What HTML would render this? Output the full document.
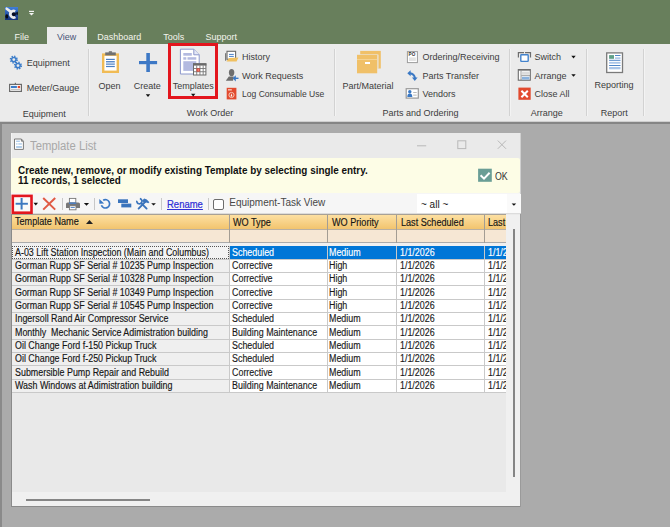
<!DOCTYPE html>
<html><head><meta charset="utf-8">
<style>
*{box-sizing:border-box;margin:0;padding:0}
html,body{width:670px;height:527px;overflow:hidden;background:#ababab;font-family:"Liberation Sans",sans-serif}
.a{position:absolute}
.t{position:absolute;white-space:pre;transform-origin:0 0}
.r{color:#3c3c3c}
.g{transform:scaleX(0.89);color:#151515;-webkit-text-stroke:0.15px currentColor}
.tab{color:#f4f4ec}
.sep{position:absolute;width:1px;background:#d2d2d2}
svg{position:absolute;overflow:visible}
</style></head><body>
<div class="a" style="left:0;top:0;width:670px;height:44px;background:#687f5c"></div>
<div class="a" style="left:47px;top:27px;width:40px;height:17px;background:#ebebeb"></div>
<div class="t r tab" style="left:14.5px;top:32.98px;font-size:9px;line-height:9px;">File</div>
<div class="t r" style="left:57px;top:32.98px;font-size:9px;line-height:9px;color:#4a5577;">View</div>
<div class="t r tab" style="left:97.3px;top:32.98px;font-size:9px;line-height:9px;">Dashboard</div>
<div class="t r tab" style="left:163.2px;top:32.98px;font-size:9px;line-height:9px;">Tools</div>
<div class="t r tab" style="left:205.6px;top:32.98px;font-size:9px;line-height:9px;">Support</div>
<div class="a" style="left:0;top:44px;width:670px;height:78px;background:#ebebeb"></div>
<div class="a" style="left:0;top:121px;width:670px;height:1px;background:#cfcfcf"></div>
<div class="a" style="left:0;top:122px;width:670px;height:2px;background:#858585"></div>
<div class="a" style="left:0;top:124px;width:2px;height:403px;background:#8a8a8a"></div>
<div class="sep" style="left:88px;top:49px;height:67px"></div>
<div class="a" style="left:89px;top:49px;width:1px;height:67px;background:#f3f3f3"></div>
<div class="sep" style="left:334px;top:49px;height:67px"></div>
<div class="a" style="left:335px;top:49px;width:1px;height:67px;background:#f3f3f3"></div>
<div class="sep" style="left:509px;top:49px;height:67px"></div>
<div class="a" style="left:510px;top:49px;width:1px;height:67px;background:#f3f3f3"></div>
<div class="sep" style="left:586px;top:49px;height:67px"></div>
<div class="a" style="left:587px;top:49px;width:1px;height:67px;background:#f3f3f3"></div>
<div class="sep" style="left:643px;top:49px;height:67px"></div>
<div class="a" style="left:644px;top:49px;width:1px;height:67px;background:#f3f3f3"></div>
<div class="t r" style="left:26.8px;top:59.48px;font-size:9px;line-height:9px;">Equipment</div>
<div class="t r" style="left:26.8px;top:83.98px;font-size:9px;line-height:9px;">Meter/Gauge</div>
<div class="t r" style="left:22.8px;top:109.98px;font-size:9px;line-height:9px;">Equipment</div>
<div class="t r" style="left:98.5px;top:81.58px;font-size:9px;line-height:9px;">Open</div>
<div class="t r" style="left:133.8px;top:81.58px;font-size:9px;line-height:9px;">Create</div>
<div class="t r" style="left:172.8px;top:81.68px;font-size:9px;line-height:9px;">Templates</div>
<div class="t r" style="left:242.0px;top:52.98px;font-size:9px;line-height:9px;">History</div>
<div class="t r" style="left:242.0px;top:71.58px;font-size:9px;line-height:9px;">Work Requests</div>
<div class="t r" style="left:242.20000000000002px;top:90.38px;font-size:9px;line-height:9px;transform:scaleX(0.95);">Log Consumable Use</div>
<div class="t r" style="left:186.8px;top:109.48px;font-size:9px;line-height:9px;">Work Order</div>
<div class="t r" style="left:342.40000000000003px;top:81.78px;font-size:9px;line-height:9px;">Part/Material</div>
<div class="t r" style="left:422.5px;top:52.98px;font-size:9px;line-height:9px;">Ordering/Receiving</div>
<div class="t r" style="left:422.5px;top:71.58px;font-size:9px;line-height:9px;">Parts Transfer</div>
<div class="t r" style="left:422.5px;top:90.38px;font-size:9px;line-height:9px;">Vendors</div>
<div class="t r" style="left:382.5px;top:109.48px;font-size:9px;line-height:9px;">Parts and Ordering</div>
<div class="t r" style="left:534.5999999999999px;top:52.98px;font-size:9px;line-height:9px;">Switch</div>
<div class="t r" style="left:534.5999999999999px;top:71.58px;font-size:9px;line-height:9px;">Arrange</div>
<div class="t r" style="left:534.5999999999999px;top:90.38px;font-size:9px;line-height:9px;">Close All</div>
<div class="t r" style="left:530.8px;top:109.48px;font-size:9px;line-height:9px;">Arrange</div>
<div class="t r" style="left:594.5999999999999px;top:81.38px;font-size:9px;line-height:9px;">Reporting</div>
<div class="t r" style="left:600.8px;top:109.48px;font-size:9px;line-height:9px;">Report</div>
<div class="a" style="left:168px;top:43px;width:50px;height:56px;border:3px solid #e3151d"></div>
<div class="a" style="left:11px;top:133px;width:510px;height:374px;background:#eaeaea;border-right:1px solid #d0d0d0"></div>
<div class="a" style="left:11px;top:133px;width:1px;height:80px;background:#f4f4f4"></div>
<div class="t " style="left:29.6px;top:140.24px;font-size:12px;line-height:12px;transform:scaleX(0.94);color:#a8a8a8;">Template List</div>
<div class="a" style="left:11px;top:158px;width:509px;height:35px;border-radius:2px;background:#fdfde6"></div>
<div class="t " style="left:18px;top:165.53px;font-size:10px;line-height:10px;transform:scaleX(0.99);font-weight:bold;color:#101010;">Create new, remove, or modify existing Template by selecting single entry.</div>
<div class="t " style="left:18px;top:176.03px;font-size:10px;line-height:10px;transform:scaleX(0.99);font-weight:bold;color:#101010;">11 records, 1 selected</div>
<div class="a" style="left:11px;top:193px;width:509px;height:21px;background:#f6f6f6"></div>
<div class="a" style="left:12px;top:213px;width:508px;height:1px;background:#dcdcdc"></div>
<div class="a" style="left:12px;top:214px;width:494px;height:1px;background:#a8a196"></div>
<div class="a" style="left:417px;top:194px;width:104px;height:19px;background:#ffffff"></div>
<div class="t " style="left:421px;top:200.03px;font-size:10px;line-height:10px;transform:scaleX(1.0);color:#202020;">~ all ~</div>
<div class="t " style="left:494.8px;top:172.34px;font-size:10px;line-height:10px;transform:scaleX(0.88);color:#333;">OK</div>
<div class="t " style="left:229.3px;top:198.23px;font-size:10px;line-height:10px;transform:scaleX(1.0);color:#474747;">Equipment-Task View</div>
<div class="t " style="left:166.7px;top:200.13px;font-size:10px;line-height:10px;transform:scaleX(0.95);color:#2f2fd6;text-decoration:underline;-webkit-text-stroke:0.2px #2f2fd6;">Rename</div>
<div class="a" style="left:62px;top:198px;width:1px;height:12px;background:#c8c8c8"></div>
<div class="a" style="left:94px;top:198px;width:1px;height:12px;background:#c8c8c8"></div>
<div class="a" style="left:161px;top:198px;width:1px;height:12px;background:#c8c8c8"></div>
<div class="a" style="left:208px;top:198px;width:1px;height:12px;background:#c8c8c8"></div>
<div class="a" style="left:213px;top:198.5px;width:11px;height:11px;border:1px solid #6d6d6d;border-radius:2px;background:#fff"></div>
<div class="a" style="left:12px;top:215px;width:494px;height:15px;background:linear-gradient(#fde0a2,#f2c46e);border-bottom:1px solid #b9b0a2"></div>
<div class="a" style="left:12px;top:230px;width:494px;height:13px;background:#f6e7d4;border-bottom:1px solid #ababab"></div>
<div class="a" style="left:12px;top:243px;width:494px;height:3px;background:#f0f0f0"></div>
<div class="a" style="left:229px;top:215px;width:1px;height:28px;background:#a39d94"></div>
<div class="a" style="left:327px;top:215px;width:1px;height:28px;background:#a39d94"></div>
<div class="a" style="left:396px;top:215px;width:1px;height:28px;background:#a39d94"></div>
<div class="a" style="left:484px;top:215px;width:1px;height:28px;background:#a39d94"></div>
<div class="t g" style="left:15px;top:217.13px;font-size:10px;line-height:10px;transform:scaleX(0.91);">Template Name</div>
<div class="t g" style="left:233px;top:217.84px;font-size:10px;line-height:10px;transform:scaleX(0.91);">WO Type</div>
<div class="t g" style="left:331.6px;top:217.84px;font-size:10px;line-height:10px;transform:scaleX(0.91);">WO Priority</div>
<div class="t g" style="left:400.9px;top:217.84px;font-size:10px;line-height:10px;transform:scaleX(0.91);">Last Scheduled</div>
<div class="t g" style="left:488.3px;top:217.84px;font-size:10px;line-height:10px;transform:scaleX(0.91);">Last</div>
<svg style="left:86px;top:220px" width="7" height="4"><path d="M0 4 L3.5 0 L7 4Z" fill="#222"/></svg>
<div class="a" style="left:12px;top:246px;width:494px;height:246px;background:#e9e9e9"></div>
<div class="a" style="left:12px;top:246px;width:217px;height:13px;background:#f3f3f3"></div>
<div class="a" style="left:230px;top:246px;width:276px;height:13px;background:#0076d7"></div>
<div class="a" style="left:12px;top:259px;width:494px;height:1px;background:#c9c9c9"></div>
<div class="t g" style="left:14.8px;top:248.03px;font-size:10px;line-height:10px;">A-03 Lift Station Inspection (Main and Columbus)</div>
<div class="t g" style="left:232px;top:248.03px;font-size:10px;line-height:10px;color:#ffffff;">Scheduled</div>
<div class="t g" style="left:329.3px;top:248.03px;font-size:10px;line-height:10px;color:#ffffff;">Medium</div>
<div class="t g" style="left:399.5px;top:248.03px;font-size:10px;line-height:10px;color:#ffffff;">1/1/2026</div>
<div class="a" style="left:486px;top:246px;width:20px;height:13px;overflow:hidden"><div class="t g" style="left:1.5px;top:2.04px;font-size:10px;line-height:10px;color:#ffffff">1/1/2026</div></div>
<div class="a" style="left:12px;top:260px;width:217px;height:12px;background:#efefef"></div>
<div class="a" style="left:230px;top:260px;width:276px;height:12px;background:#ffffff"></div>
<div class="a" style="left:12px;top:272px;width:494px;height:1px;background:#c9c9c9"></div>
<div class="t g" style="left:14.8px;top:261.04px;font-size:10px;line-height:10px;">Gorman Rupp SF Serial # 10235 Pump Inspection</div>
<div class="t g" style="left:232px;top:261.04px;font-size:10px;line-height:10px;color:#1a1a1a;">Corrective</div>
<div class="t g" style="left:329.3px;top:261.04px;font-size:10px;line-height:10px;color:#1a1a1a;">High</div>
<div class="t g" style="left:399.5px;top:261.04px;font-size:10px;line-height:10px;color:#1a1a1a;">1/1/2026</div>
<div class="a" style="left:486px;top:260px;width:20px;height:12px;overflow:hidden"><div class="t g" style="left:1.5px;top:1.04px;font-size:10px;line-height:10px;color:#1a1a1a">1/1/2026</div></div>
<div class="a" style="left:12px;top:273px;width:217px;height:12px;background:#efefef"></div>
<div class="a" style="left:230px;top:273px;width:276px;height:12px;background:#ffffff"></div>
<div class="a" style="left:12px;top:285px;width:494px;height:1px;background:#c9c9c9"></div>
<div class="t g" style="left:14.8px;top:274.04px;font-size:10px;line-height:10px;">Gorman Rupp SF Serial # 10328 Pump Inspection</div>
<div class="t g" style="left:232px;top:274.04px;font-size:10px;line-height:10px;color:#1a1a1a;">Corrective</div>
<div class="t g" style="left:329.3px;top:274.04px;font-size:10px;line-height:10px;color:#1a1a1a;">High</div>
<div class="t g" style="left:399.5px;top:274.04px;font-size:10px;line-height:10px;color:#1a1a1a;">1/1/2026</div>
<div class="a" style="left:486px;top:273px;width:20px;height:12px;overflow:hidden"><div class="t g" style="left:1.5px;top:1.04px;font-size:10px;line-height:10px;color:#1a1a1a">1/1/2026</div></div>
<div class="a" style="left:12px;top:286px;width:217px;height:13px;background:#efefef"></div>
<div class="a" style="left:230px;top:286px;width:276px;height:13px;background:#ffffff"></div>
<div class="a" style="left:12px;top:299px;width:494px;height:1px;background:#c9c9c9"></div>
<div class="t g" style="left:14.8px;top:288.04px;font-size:10px;line-height:10px;">Gorman Rupp SF Serial # 10349 Pump Inspection</div>
<div class="t g" style="left:232px;top:288.04px;font-size:10px;line-height:10px;color:#1a1a1a;">Corrective</div>
<div class="t g" style="left:329.3px;top:288.04px;font-size:10px;line-height:10px;color:#1a1a1a;">High</div>
<div class="t g" style="left:399.5px;top:288.04px;font-size:10px;line-height:10px;color:#1a1a1a;">1/1/2026</div>
<div class="a" style="left:486px;top:286px;width:20px;height:13px;overflow:hidden"><div class="t g" style="left:1.5px;top:2.04px;font-size:10px;line-height:10px;color:#1a1a1a">1/1/2026</div></div>
<div class="a" style="left:12px;top:300px;width:217px;height:12px;background:#efefef"></div>
<div class="a" style="left:230px;top:300px;width:276px;height:12px;background:#ffffff"></div>
<div class="a" style="left:12px;top:312px;width:494px;height:1px;background:#c9c9c9"></div>
<div class="t g" style="left:14.8px;top:301.04px;font-size:10px;line-height:10px;">Gorman Rupp SF Serial # 10545 Pump Inspection</div>
<div class="t g" style="left:232px;top:301.04px;font-size:10px;line-height:10px;color:#1a1a1a;">Corrective</div>
<div class="t g" style="left:329.3px;top:301.04px;font-size:10px;line-height:10px;color:#1a1a1a;">High</div>
<div class="t g" style="left:399.5px;top:301.04px;font-size:10px;line-height:10px;color:#1a1a1a;">1/1/2026</div>
<div class="a" style="left:486px;top:300px;width:20px;height:12px;overflow:hidden"><div class="t g" style="left:1.5px;top:1.04px;font-size:10px;line-height:10px;color:#1a1a1a">1/1/2026</div></div>
<div class="a" style="left:12px;top:313px;width:217px;height:12px;background:#efefef"></div>
<div class="a" style="left:230px;top:313px;width:276px;height:12px;background:#ffffff"></div>
<div class="a" style="left:12px;top:325px;width:494px;height:1px;background:#c9c9c9"></div>
<div class="t g" style="left:14.8px;top:314.04px;font-size:10px;line-height:10px;">Ingersoll Rand Air Compressor Service</div>
<div class="t g" style="left:232px;top:314.04px;font-size:10px;line-height:10px;color:#1a1a1a;">Scheduled</div>
<div class="t g" style="left:329.3px;top:314.04px;font-size:10px;line-height:10px;color:#1a1a1a;">Medium</div>
<div class="t g" style="left:399.5px;top:314.04px;font-size:10px;line-height:10px;color:#1a1a1a;">1/1/2026</div>
<div class="a" style="left:486px;top:313px;width:20px;height:12px;overflow:hidden"><div class="t g" style="left:1.5px;top:1.04px;font-size:10px;line-height:10px;color:#1a1a1a">1/1/2026</div></div>
<div class="a" style="left:12px;top:326px;width:217px;height:13px;background:#efefef"></div>
<div class="a" style="left:230px;top:326px;width:276px;height:13px;background:#ffffff"></div>
<div class="a" style="left:12px;top:339px;width:494px;height:1px;background:#c9c9c9"></div>
<div class="t g" style="left:14.8px;top:328.04px;font-size:10px;line-height:10px;">Monthly  Mechanic Service Adimistration building</div>
<div class="t g" style="left:232px;top:328.04px;font-size:10px;line-height:10px;color:#1a1a1a;">Building Maintenance</div>
<div class="t g" style="left:329.3px;top:328.04px;font-size:10px;line-height:10px;color:#1a1a1a;">Medium</div>
<div class="t g" style="left:399.5px;top:328.04px;font-size:10px;line-height:10px;color:#1a1a1a;">1/1/2026</div>
<div class="a" style="left:486px;top:326px;width:20px;height:13px;overflow:hidden"><div class="t g" style="left:1.5px;top:2.04px;font-size:10px;line-height:10px;color:#1a1a1a">1/1/2026</div></div>
<div class="a" style="left:12px;top:340px;width:217px;height:12px;background:#efefef"></div>
<div class="a" style="left:230px;top:340px;width:276px;height:12px;background:#ffffff"></div>
<div class="a" style="left:12px;top:352px;width:494px;height:1px;background:#c9c9c9"></div>
<div class="t g" style="left:14.8px;top:341.04px;font-size:10px;line-height:10px;">Oil Change Ford f-150 Pickup Truck</div>
<div class="t g" style="left:232px;top:341.04px;font-size:10px;line-height:10px;color:#1a1a1a;">Scheduled</div>
<div class="t g" style="left:329.3px;top:341.04px;font-size:10px;line-height:10px;color:#1a1a1a;">Medium</div>
<div class="t g" style="left:399.5px;top:341.04px;font-size:10px;line-height:10px;color:#1a1a1a;">1/1/2026</div>
<div class="a" style="left:486px;top:340px;width:20px;height:12px;overflow:hidden"><div class="t g" style="left:1.5px;top:1.04px;font-size:10px;line-height:10px;color:#1a1a1a">1/1/2026</div></div>
<div class="a" style="left:12px;top:353px;width:217px;height:12px;background:#efefef"></div>
<div class="a" style="left:230px;top:353px;width:276px;height:12px;background:#ffffff"></div>
<div class="a" style="left:12px;top:365px;width:494px;height:1px;background:#c9c9c9"></div>
<div class="t g" style="left:14.8px;top:354.04px;font-size:10px;line-height:10px;">Oil Change Ford f-250 Pickup Truck</div>
<div class="t g" style="left:232px;top:354.04px;font-size:10px;line-height:10px;color:#1a1a1a;">Scheduled</div>
<div class="t g" style="left:329.3px;top:354.04px;font-size:10px;line-height:10px;color:#1a1a1a;">Medium</div>
<div class="t g" style="left:399.5px;top:354.04px;font-size:10px;line-height:10px;color:#1a1a1a;">1/1/2026</div>
<div class="a" style="left:486px;top:353px;width:20px;height:12px;overflow:hidden"><div class="t g" style="left:1.5px;top:1.04px;font-size:10px;line-height:10px;color:#1a1a1a">1/1/2026</div></div>
<div class="a" style="left:12px;top:366px;width:217px;height:13px;background:#efefef"></div>
<div class="a" style="left:230px;top:366px;width:276px;height:13px;background:#ffffff"></div>
<div class="a" style="left:12px;top:379px;width:494px;height:1px;background:#c9c9c9"></div>
<div class="t g" style="left:14.8px;top:368.04px;font-size:10px;line-height:10px;">Submersible Pump Repair and Rebuild</div>
<div class="t g" style="left:232px;top:368.04px;font-size:10px;line-height:10px;color:#1a1a1a;">Corrective</div>
<div class="t g" style="left:329.3px;top:368.04px;font-size:10px;line-height:10px;color:#1a1a1a;">Medium</div>
<div class="t g" style="left:399.5px;top:368.04px;font-size:10px;line-height:10px;color:#1a1a1a;">1/1/2026</div>
<div class="a" style="left:486px;top:366px;width:20px;height:13px;overflow:hidden"><div class="t g" style="left:1.5px;top:2.04px;font-size:10px;line-height:10px;color:#1a1a1a">1/1/2026</div></div>
<div class="a" style="left:12px;top:380px;width:217px;height:12px;background:#efefef"></div>
<div class="a" style="left:230px;top:380px;width:276px;height:12px;background:#ffffff"></div>
<div class="a" style="left:12px;top:392px;width:494px;height:1px;background:#c9c9c9"></div>
<div class="t g" style="left:14.8px;top:381.04px;font-size:10px;line-height:10px;">Wash Windows at Adimistration building</div>
<div class="t g" style="left:232px;top:381.04px;font-size:10px;line-height:10px;color:#1a1a1a;">Building Maintenance</div>
<div class="t g" style="left:329.3px;top:381.04px;font-size:10px;line-height:10px;color:#1a1a1a;">Medium</div>
<div class="t g" style="left:399.5px;top:381.04px;font-size:10px;line-height:10px;color:#1a1a1a;">1/1/2026</div>
<div class="a" style="left:486px;top:380px;width:20px;height:12px;overflow:hidden"><div class="t g" style="left:1.5px;top:1.04px;font-size:10px;line-height:10px;color:#1a1a1a">1/1/2026</div></div>
<div class="a" style="left:229px;top:246px;width:1px;height:147px;background:#c9c9c9"></div>
<div class="a" style="left:327px;top:246px;width:1px;height:147px;background:#c9c9c9"></div>
<div class="a" style="left:396px;top:246px;width:1px;height:147px;background:#c9c9c9"></div>
<div class="a" style="left:484px;top:246px;width:1px;height:147px;background:#c9c9c9"></div>
<div class="a" style="left:12px;top:246px;width:217px;height:13px;border:1px dotted #555"></div>
<div class="a" style="left:12px;top:492px;width:508px;height:14px;background:#f0f0f0"></div>
<div class="a" style="left:506px;top:215px;width:14px;height:291px;background:#f0f0f0"></div>
<div class="a" style="left:11px;top:214px;width:1px;height:293px;background:#8a8a8a"></div>
<div class="a" style="left:12px;top:506px;width:509px;height:1px;background:#8a8a8a"></div>
<div class="a" style="left:520px;top:214px;width:1px;height:293px;background:#9a9a9a"></div>
<div class="a" style="left:507px;top:194px;width:14px;height:19px;background:#fafafa"></div>
<div class="a" style="left:513px;top:229px;width:2px;height:248px;background:#858585"></div>
<div class="a" style="left:26px;top:498.5px;width:124px;height:2px;background:#858585"></div>
<svg style="left:0;top:0" width="670" height="527" viewBox="0 0 670 527">
<!-- app icon -->
<defs>
<linearGradient id="appg" x1="0" y1="0" x2="0" y2="1"><stop offset="0" stop-color="#3f7fd8"/><stop offset="0.6" stop-color="#2652a6"/><stop offset="1" stop-color="#12307a"/></linearGradient>
</defs>
<rect x="5" y="7" width="13" height="13" fill="url(#appg)"/>
<ellipse cx="6.8" cy="16.4" rx="1.5" ry="2.2" fill="#060a14"/>
<ellipse cx="17.1" cy="13.3" rx="0.9" ry="1.9" fill="#0a1428"/>
<path d="M6.7 8.7 L10.6 11.6" stroke="#ececec" stroke-width="2.6" stroke-linecap="round"/>
<circle cx="13.8" cy="14.1" r="2.2" fill="#070c22"/>
<path d="M15.2 11.3 A3.3 3.3 0 1 0 15.4 17" fill="none" stroke="#ebebeb" stroke-width="2.6"/>
<!-- QAT -->
<rect x="29" y="10.8" width="5" height="1.2" fill="#f4f4f4"/>
<path d="M29 13 L34 13 L31.5 15.4Z" fill="#f4f4f4"/>

<!-- gears -->
<g fill="none" stroke="#3b7cc9">
<circle cx="13.8" cy="59.6" r="3.2" stroke-width="1.8" stroke-dasharray="1.25 1.26"/>
<circle cx="13.8" cy="59.6" r="2.2" stroke-width="1.5"/>
<circle cx="18" cy="65.6" r="3.2" stroke-width="1.8" stroke-dasharray="1.25 1.26"/>
<circle cx="18" cy="65.6" r="2.2" stroke-width="1.5"/>
</g>
<!-- meter gauge -->
<rect x="9.6" y="84.4" width="11.8" height="7" fill="#fff" stroke="#6b6b6b" stroke-width="1.2"/>
<rect x="14.8" y="82.8" width="1.2" height="1.6" fill="#6b6b6b"/>
<rect x="10.9" y="85.9" width="6" height="2.2" fill="#3a7cc9"/>
<rect x="17.7" y="85.9" width="2.4" height="2.3" fill="#e0452a"/>
<rect x="11" y="89.2" width="9" height="0.6" fill="#9a9a9a"/>

<!-- open clipboard -->
<rect x="103.2" y="54.6" width="14.6" height="17.2" fill="#fff" stroke="#f0bb55" stroke-width="2.4"/>
<rect x="105.2" y="52.4" width="10.6" height="3" fill="#707070"/>
<rect x="108.7" y="51.2" width="3.4" height="1.6" rx="0.6" fill="#6a6a6a"/>
<g fill="#4a7fc4"><rect x="106" y="58.8" width="8.8" height="1.2"/><rect x="106" y="61.1" width="8.8" height="1.2"/><rect x="106" y="63.5" width="8.8" height="1.2"/><rect x="106" y="65.9" width="8.8" height="1.2"/></g>
<rect x="106" y="62.3" width="8.8" height="1.2" fill="#a9c4e6"/>

<!-- create plus -->
<rect x="146.3" y="53" width="3.6" height="19" fill="#3d78c5"/>
<rect x="139" y="61" width="18.1" height="3.2" fill="#3d78c5"/>
<path d="M145.8 94.2 L150.2 94.2 L148 96.9Z" fill="#111"/>

<!-- templates -->
<path d="M180.4 49.2 L193.8 49.2 L199.2 54.8 L199.2 74 L180.4 74Z" fill="#fff" stroke="#8c98cc" stroke-width="1"/>
<path d="M193.8 49.2 L193.8 54.8 L199.2 54.8" fill="#e4e8f6" stroke="#8c98cc" stroke-width="1"/>
<g fill="#b3bae0"><rect x="183.3" y="53" width="8.5" height="2.7"/><rect x="183.3" y="57.2" width="3" height="2.5"/><rect x="187.5" y="57.2" width="8.8" height="2.5"/><rect x="183.3" y="61.2" width="13" height="9.7"/></g>
<rect x="193.5" y="63.8" width="12.4" height="11.2" fill="#fff" stroke="#6a6a6a" stroke-width="1"/>
<rect x="193" y="63.3" width="13.4" height="2.3" fill="#6a6a6a"/>
<g fill="#777"><rect x="196.3" y="65.5" width="0.9" height="9.5"/><rect x="199.5" y="65.5" width="0.9" height="9.5"/><rect x="202.7" y="65.5" width="0.9" height="9.5"/><rect x="193.5" y="68.1" width="12.4" height="0.9"/><rect x="193.5" y="71.3" width="12.4" height="0.9"/></g>
<rect x="196.6" y="68.4" width="3.2" height="3.2" fill="#e23b2a"/>
<rect x="197.7" y="69.5" width="1" height="1" fill="#fff"/>
<path d="M191 93.8 L195.4 93.8 L193.2 96.4Z" fill="#111"/>

<!-- history -->
<rect x="225" y="53.2" width="1.2" height="7.5" fill="#7a7a7a"/>
<rect x="227" y="51.3" width="8.6" height="8" fill="#fff" stroke="#6a6a6a" stroke-width="1.1"/>
<rect x="229" y="53.9" width="4.8" height="1" fill="#4a80c8"/>
<rect x="229" y="55.9" width="4.8" height="1" fill="#4a80c8"/>
<path d="M229.2 58 L238.4 57.6 L236.6 61.6 L226.4 61.6Z" fill="#f0c060"/>

<!-- work requests -->
<ellipse cx="231.6" cy="72.6" rx="2.7" ry="3.6" fill="#6e6e6e"/>
<path d="M228.8 76.6 L233.8 76.6 L233 80.8 L225.8 80.8Z" fill="#6e6e6e"/>
<path d="M232.6 78.3 L235.8 75.2 L235.8 81.6Z" fill="#3a78c4"/>
<rect x="235" y="77.6" width="3.5" height="1.4" fill="#3a78c4"/>

<!-- log consumable -->
<rect x="226.7" y="87.8" width="9.7" height="11.6" fill="#e24a2e"/>
<rect x="228" y="89" width="3.8" height="1.6" fill="#f6b8a8"/>
<circle cx="231.5" cy="95" r="2.6" fill="none" stroke="#f7c6b6" stroke-width="1"/>
<path d="M231.4 93.2 L232.4 96.6 L230.6 96.6Z" fill="#fff"/>

<!-- part material -->
<rect x="360.2" y="50.9" width="20.6" height="17.6" fill="#f0c068"/>
<rect x="378" y="54.6" width="0.8" height="14" fill="#ebebeb" opacity="0.6"/>
<rect x="356.6" y="54.3" width="21.2" height="19.2" fill="#ebebeb"/>
<rect x="357" y="54.8" width="20.2" height="18.5" fill="#f0c068"/>
<rect x="357" y="59.2" width="20.2" height="0.7" fill="#f7dca5"/>
<rect x="365" y="62" width="5" height="2" fill="#fff"/>

<!-- PO -->
<rect x="407.4" y="51.6" width="10" height="11" fill="#fff" stroke="#9c9c9c" stroke-width="1"/>
<text x="408.6" y="55.8" font-family="Liberation Sans" font-size="4.6" font-weight="bold" fill="#333">PO</text>
<rect x="409" y="57.4" width="6.8" height="3.6" fill="#e3e3e3"/>

<!-- parts transfer -->
<path d="M409.8 73.3 Q414.3 73.8 415 78.2" fill="none" stroke="#3a78c4" stroke-width="2"/>
<path d="M407.3 73.3 L410.6 70.3 L410.6 76.2Z" fill="#3a78c4"/>
<path d="M412 77.4 L417.6 77.4 L414.8 81Z" fill="#3a78c4"/>

<!-- vendors -->
<rect x="406.2" y="88.7" width="12.1" height="9.4" fill="#fff" stroke="#999" stroke-width="1.2"/>
<circle cx="409.8" cy="91.8" r="1.7" fill="#3a78c4"/>
<path d="M407.3 97 Q407.3 93.6 409.8 93.6 Q412.3 93.6 412.3 97Z" fill="#3a78c4"/>
<rect x="413.2" y="92" width="3.5" height="0.8" fill="#a8a8a8"/>
<rect x="413.2" y="94.7" width="3.5" height="0.8" fill="#a8a8a8"/>

<!-- switch -->
<path d="M518.4 57.6 L518.4 52.6 L524 52.6 M525 52.6 L530.5 52.6 L530.5 57.6" fill="none" stroke="#6d6d6d" stroke-width="1.2"/>
<rect x="520.8" y="54.8" width="7.4" height="6.6" rx="0.6" fill="#fff" stroke="#4282cc" stroke-width="1.4"/>
<path d="M571.3 55.8 L575.7 55.8 L573.5 58.4Z" fill="#111"/>

<!-- arrange -->
<rect x="518.3" y="69.6" width="12" height="10.6" fill="#fff" stroke="#6d6d6d" stroke-width="1.1"/>
<rect x="518.3" y="69.2" width="12" height="1.4" fill="#6d6d6d"/>
<rect x="520.6" y="70.4" width="0.9" height="9.8" fill="#8a8a8a"/>
<rect x="521.6" y="71.6" width="8" height="3.2" fill="#dcdcdc"/>
<rect x="522" y="76.8" width="7.4" height="2.8" fill="#8ab2de"/>
<rect x="521.5" y="75.3" width="8.6" height="0.8" fill="#8a8a8a"/>
<path d="M571.3 74.2 L575.7 74.2 L573.5 76.8Z" fill="#111"/>

<!-- close all -->
<rect x="518.4" y="87.6" width="12.3" height="12.2" fill="#e24a2e"/>
<path d="M521.4 90.7 L527.8 97.2 M527.8 90.7 L521.4 97.2" stroke="#fff" stroke-width="2"/>

<!-- reporting -->
<rect x="606.7" y="52.9" width="15.8" height="19.6" fill="#fff" stroke="#7a7a7a" stroke-width="1.3"/>
<rect x="609.1" y="55.1" width="4.9" height="3.7" fill="#5f9f88"/>
<g fill="#4f86c8"><rect x="615" y="55" width="5.5" height="1"/><rect x="609.1" y="59.8" width="11.4" height="1"/><rect x="609.1" y="65" width="11.4" height="1"/></g>
<g fill="#a9c5e8"><rect x="615" y="57.3" width="5.5" height="1.6"/><rect x="609.1" y="61.9" width="11.4" height="1.8"/><rect x="609.1" y="67" width="11.4" height="2.3"/></g>

<!-- dialog title icon -->
<path d="M14.5 139 L21.4 139 L23.4 141.2 L23.4 149.4 L14.5 149.4Z" fill="#fff" stroke="#7a7a7a" stroke-width="1"/>
<path d="M21.4 139 L21.4 141.2 L23.4 141.2" fill="none" stroke="#7a7a7a" stroke-width="1"/>
<g fill="#a8c8e8"><rect x="16.1" y="140.6" width="3.8" height="1.3"/><rect x="16.1" y="143.3" width="1.4" height="1.3"/><rect x="18.3" y="143.3" width="3.6" height="1.3"/><rect x="16.1" y="146.1" width="5.8" height="1.8"/></g>
<!-- window buttons -->
<rect x="417" y="145.3" width="9.2" height="1" fill="#b8b8b8"/>
<rect x="457.8" y="140.8" width="8" height="7.8" fill="none" stroke="#b8b8b8" stroke-width="1"/>
<path d="M497.8 140.6 L506 148.8 M506 140.6 L497.8 148.8" stroke="#b8b8b8" stroke-width="1"/>

<!-- OK checkbox -->
<rect x="478.1" y="168.7" width="13.7" height="13.1" fill="#6a9e96"/>
<path d="M480.6 175.3 L484 178.6 L489.6 172.8" fill="none" stroke="#fff" stroke-width="2"/>

<!-- toolbar -->
<rect x="12.8" y="195.9" width="18.7" height="16.8" fill="#fafafa" stroke="#e3161e" stroke-width="2.6"/>
<rect x="20.6" y="198" width="2" height="11.5" fill="#3d78c0"/>
<rect x="15.6" y="202.8" width="12.3" height="1.9" fill="#3d78c0"/>
<path d="M33.5 202.8 L38 202.8 L35.75 205.4Z" fill="#111"/>
<path d="M43.2 198 L55.2 209.6 M55.2 198 L43.2 209.6" stroke="#e05a45" stroke-width="2"/>
<!-- printer -->
<rect x="69.4" y="198.4" width="6.4" height="4.6" fill="#fff" stroke="#777" stroke-width="0.9"/>
<path d="M66 204 Q66 202.4 67.6 202.4 L78.4 202.4 Q80 202.4 80 204 L80 208 L66 208Z" fill="#777"/>
<rect x="69" y="202.5" width="7.2" height="1.4" fill="#4a80c8"/>
<rect x="69.4" y="205.8" width="6.6" height="4" fill="#fff" stroke="#777" stroke-width="0.9"/>
<rect x="70.6" y="207" width="4.2" height="0.9" fill="#4a80c8"/>
<path d="M83.9 203 L89.1 203 L86.5 205.8Z" fill="#111"/>
<!-- refresh -->
<path d="M101.45 205.24 A4.2 4.2 0 1 0 103.17 200.24" fill="none" stroke="#3a78c4" stroke-width="1.7"/>
<path d="M99.3 198.9 L99.3 203.7 L104.2 203.6Z" fill="#3a78c4"/>
<!-- bars -->
<rect x="118" y="199.3" width="10" height="3.7" fill="#3a74bc"/>
<rect x="121.3" y="203.6" width="10" height="3.8" fill="#3a74bc"/>
<!-- tools -->
<path d="M138.6 208.6 L145.2 201.8" stroke="#3a74bc" stroke-width="1.9" stroke-linecap="round"/>
<path d="M142 200.8 L144.2 198.6 Q146.8 198.6 149.4 202.2 L148.2 203.3 Q146.2 201.8 144.4 202.9 Z" fill="#3a74bc"/>
<path d="M146.6 208.6 L141.2 203.2" stroke="#3a74bc" stroke-width="1.9" stroke-linecap="round"/>
<path d="M136.84 200.75 A2.6 2.6 0 1 0 139.85 198.64" fill="none" stroke="#3a74bc" stroke-width="1.7"/>
<path d="M151.2 203.2 L155.9 203.2 L153.55 205.6Z" fill="#111"/>
<!-- combo arrow -->
<path d="M511.6 203.6 L516.2 203.6 L513.9 205.8Z" fill="#111"/>
</svg>
</body></html>
